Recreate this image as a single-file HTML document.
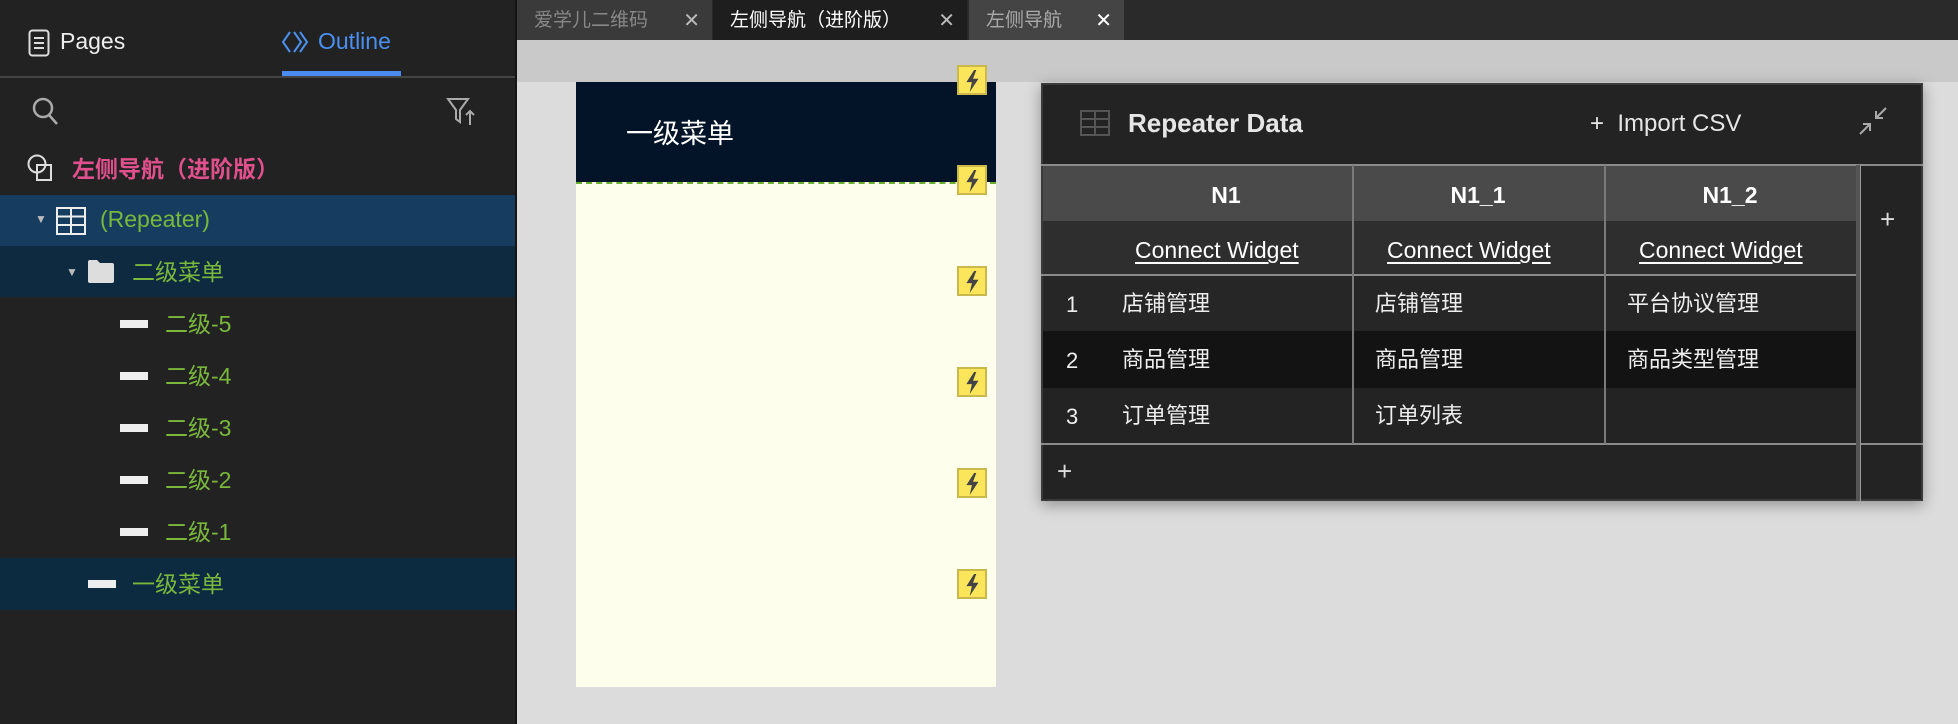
<!DOCTYPE html>
<html><head><meta charset="utf-8"><style>
*{margin:0;padding:0;box-sizing:border-box}
body{width:1958px;height:724px;overflow:hidden;background:#dcdcdc;font-family:"Liberation Sans","Noto Sans CJK SC",sans-serif;position:relative}
.a{position:absolute}
.side{left:0;top:0;width:517px;height:724px;background:#222;border-right:2px solid #151515}
.g{color:#7ab83c;font-size:23px}
.bar{position:absolute;width:28px;height:8px;background:#eee}
.tab{position:absolute;top:0;height:40px;background:#3a3a3a;color:#888;font-size:19px;line-height:42px;padding-left:17px}
.tab .x{position:absolute;right:12px;top:0;color:#bbb;font-size:20px}
.bolt{position:absolute;left:957px;width:30px;height:30px;background:#fbe55a;border:2px solid #cbb84a}
.bolt svg{position:absolute;left:6px;top:3px}
.cw{color:#fff;font-size:23px;text-decoration:underline;text-underline-offset:4px}
.cell{color:#eee;font-size:22px}
.vl{position:absolute;top:165px;width:2px;height:279px;background:#7a7a7a}
</style></head><body>
<div class="a" style="left:517px;top:40px;width:1441px;height:42px;background:#c9c9c9"></div>
<div class="a" style="left:517px;top:0;width:1441px;height:40px;background:#2a2a2a"></div>
<div class="tab" style="left:517px;width:195px">爱学儿二维码<span class="x">✕</span></div>
<div class="tab" style="left:713px;width:254px;background:#1e1e1e;color:#fff">左侧导航（进阶版）<span class="x">✕</span></div>
<div class="tab" style="left:969px;width:155px;background:#444;color:#aaa">左侧导航<span class="x" style="color:#fff">✕</span></div>

<div class="a side">
  <svg class="a" style="left:28px;top:29px" width="22" height="28" viewBox="0 0 22 28"><rect x="1.5" y="1.5" width="19" height="25" rx="3" fill="none" stroke="#ddd" stroke-width="2"/><path d="M6 9h10M6 14h10M6 19h10" stroke="#ddd" stroke-width="2"/></svg>
  <div class="a" style="left:60px;top:28px;color:#eee;font-size:23px">Pages</div>
  <svg class="a" style="left:281px;top:30px" width="28" height="24" viewBox="0 0 28 24"><path d="M9 2L2 12l7 10M13 2l7 10-7 10M19 2l7 10-7 10" fill="none" stroke="#4a90f0" stroke-width="2"/></svg>
  <div class="a" style="left:318px;top:28px;color:#4a90f0;font-size:23px">Outline</div>
  <div class="a" style="left:282px;top:71px;width:119px;height:5px;background:#4a8cf0"></div>
  <div class="a" style="left:0;top:76px;width:515px;height:2px;background:#444"></div>
  <svg class="a" style="left:31px;top:96px" width="32" height="32" viewBox="0 0 32 32"><circle cx="12" cy="12" r="9" fill="none" stroke="#aaa" stroke-width="2.5"/><path d="M18 19l8 9" stroke="#aaa" stroke-width="2.5"/></svg>
  <svg class="a" style="left:446px;top:97px" width="32" height="30" viewBox="0 0 32 30"><path d="M2 2h20l-8 11v12l-4-3v-9z" fill="none" stroke="#aaa" stroke-width="2"/><path d="M24 28V14M20 18l4-4 4 4" fill="none" stroke="#aaa" stroke-width="2"/></svg>
  <svg class="a" style="left:27px;top:153px" width="30" height="30" viewBox="0 0 30 30"><circle cx="10" cy="11" r="8.5" fill="none" stroke="#ddd" stroke-width="2"/><rect x="10" y="12" width="14" height="15" fill="none" stroke="#ddd" stroke-width="2"/></svg>
  <div class="a" style="left:72px;top:150px;color:#e0508c;font-size:23px;font-weight:bold">左侧导航（进阶版）</div>
  <div class="a" style="left:0;top:195px;width:515px;height:51px;background:#163d5f"></div>
  <div class="a" style="left:35px;top:212px;color:#bbb;font-size:12px">▼</div>
  <svg class="a" style="left:56px;top:207px" width="30" height="28" viewBox="0 0 30 28"><rect x="1" y="1" width="28" height="26" fill="none" stroke="#eee" stroke-width="2"/><path d="M1 9.5h28M1 18h28M15 1v26" stroke="#eee" stroke-width="2"/></svg>
  <div class="a g" style="left:100px;top:206px">(Repeater)</div>
  <div class="a" style="left:0;top:246px;width:515px;height:51px;background:#0e2a40"></div>
  <div class="a" style="left:66px;top:265px;color:#bbb;font-size:12px">▼</div>
  <svg class="a" style="left:87px;top:259px" width="28" height="24" viewBox="0 0 28 24"><path d="M1 3a2 2 0 0 1 2-2h7l3 3h12a2 2 0 0 1 2 2v16a2 2 0 0 1-2 2H3a2 2 0 0 1-2-2z" fill="#ddd"/></svg>
  <div class="a g" style="left:132px;top:253px">二级菜单</div>
  <div class="bar" style="left:120px;top:320px"></div><div class="a g" style="left:165px;top:305px">二级-5</div>
  <div class="bar" style="left:120px;top:372px"></div><div class="a g" style="left:165px;top:357px">二级-4</div>
  <div class="bar" style="left:120px;top:424px"></div><div class="a g" style="left:165px;top:409px">二级-3</div>
  <div class="bar" style="left:120px;top:476px"></div><div class="a g" style="left:165px;top:461px">二级-2</div>
  <div class="bar" style="left:120px;top:528px"></div><div class="a g" style="left:165px;top:513px">二级-1</div>
  <div class="a" style="left:0;top:558px;width:515px;height:52px;background:#0c2a40"></div>
  <div class="bar" style="left:88px;top:580px"></div><div class="a g" style="left:132px;top:565px">一级菜单</div>
</div>

<div class="a" style="left:576px;top:82px;width:420px;height:605px;background:#fefeec"></div>
<div class="a" style="left:576px;top:82px;width:420px;height:100px;background:#041428"></div>
<div class="a" style="left:576px;top:182px;width:420px;border-top:2px dashed #6ab030"></div>
<div class="a" style="left:626px;top:112px;color:#fff;font-size:27px">一级菜单</div>
<div class="bolt" style="top:65px"><svg width="16" height="22" viewBox="0 0 14 20"><path d="M8 0L1 11h5l-2 9 8-12H7l3-8z" fill="#444"/></svg></div>
<div class="bolt" style="top:165px"><svg width="16" height="22" viewBox="0 0 14 20"><path d="M8 0L1 11h5l-2 9 8-12H7l3-8z" fill="#444"/></svg></div>
<div class="bolt" style="top:266px"><svg width="16" height="22" viewBox="0 0 14 20"><path d="M8 0L1 11h5l-2 9 8-12H7l3-8z" fill="#444"/></svg></div>
<div class="bolt" style="top:367px"><svg width="16" height="22" viewBox="0 0 14 20"><path d="M8 0L1 11h5l-2 9 8-12H7l3-8z" fill="#444"/></svg></div>
<div class="bolt" style="top:468px"><svg width="16" height="22" viewBox="0 0 14 20"><path d="M8 0L1 11h5l-2 9 8-12H7l3-8z" fill="#444"/></svg></div>
<div class="bolt" style="top:569px"><svg width="16" height="22" viewBox="0 0 14 20"><path d="M8 0L1 11h5l-2 9 8-12H7l3-8z" fill="#444"/></svg></div>

<div class="a" style="left:1041px;top:83px;width:882px;height:418px;background:#232323;border:2px solid #3a3a3a;box-shadow:0 4px 14px rgba(0,0,0,.35)"></div>
<svg class="a" style="left:1080px;top:110px" width="30" height="26" viewBox="0 0 30 26"><rect x="1" y="1" width="28" height="24" fill="none" stroke="#555" stroke-width="2"/><path d="M1 9h28M1 17h28M15 1v24" stroke="#555" stroke-width="2"/></svg>
<div class="a" style="left:1128px;top:108px;color:#e6e6e6;font-size:26px;font-weight:bold">Repeater Data</div>
<div class="a" style="left:1590px;top:110px;color:#e6e6e6;font-size:24px">+&nbsp; Import CSV</div>
<svg class="a" style="left:1858px;top:106px" width="30" height="30" viewBox="0 0 30 30"><path d="M28 2L18 12M18 5v7h7M2 28l10-10M5 18h7v7" fill="none" stroke="#aaa" stroke-width="2"/></svg>
<div class="a" style="left:1041px;top:164px;width:882px;height:2px;background:#8a8a8a"></div>
<div class="a" style="left:1043px;top:166px;width:814px;height:55px;background:#4a4a4a"></div>
<div class="a" style="left:1043px;top:221px;width:814px;height:54px;background:#2e2e2e"></div>
<div class="a" style="left:1043px;top:276px;width:814px;height:55px;background:#262626"></div>
<div class="a" style="left:1043px;top:331px;width:814px;height:57px;background:#131313"></div>
<div class="a" style="left:1041px;top:274px;width:817px;height:2px;background:#8a8a8a"></div>
<div class="a" style="left:1041px;top:443px;width:882px;height:2px;background:#8a8a8a"></div>
<div class="vl" style="left:1352px"></div>
<div class="vl" style="left:1604px"></div>
<div class="a" style="left:1856px;top:165px;width:4px;height:336px;background:#555"></div>
<div class="a" style="left:1860px;top:165px;width:1px;height:336px;background:#999"></div>
<div class="a" style="left:1126px;top:182px;width:200px;text-align:center;color:#fff;font-size:23px;font-weight:bold">N1</div>
<div class="a" style="left:1378px;top:182px;width:200px;text-align:center;color:#fff;font-size:23px;font-weight:bold">N1_1</div>
<div class="a" style="left:1630px;top:182px;width:200px;text-align:center;color:#fff;font-size:23px;font-weight:bold">N1_2</div>
<div class="a cw" style="left:1135px;top:237px">Connect Widget</div>
<div class="a cw" style="left:1387px;top:237px">Connect Widget</div>
<div class="a cw" style="left:1639px;top:237px">Connect Widget</div>
<div class="a cell" style="left:1066px;top:292px">1</div>
<div class="a cell" style="left:1066px;top:348px">2</div>
<div class="a cell" style="left:1066px;top:404px">3</div>
<div class="a cell" style="left:1122px;top:286px">店铺管理</div>
<div class="a cell" style="left:1122px;top:342px">商品管理</div>
<div class="a cell" style="left:1122px;top:398px">订单管理</div>
<div class="a cell" style="left:1375px;top:286px">店铺管理</div>
<div class="a cell" style="left:1375px;top:342px">商品管理</div>
<div class="a cell" style="left:1375px;top:398px">订单列表</div>
<div class="a cell" style="left:1627px;top:286px">平台协议管理</div>
<div class="a cell" style="left:1627px;top:342px">商品类型管理</div>
<div class="a" style="left:1880px;top:204px;color:#ddd;font-size:26px">+</div>
<div class="a" style="left:1057px;top:456px;color:#ddd;font-size:26px">+</div>
</body></html>
